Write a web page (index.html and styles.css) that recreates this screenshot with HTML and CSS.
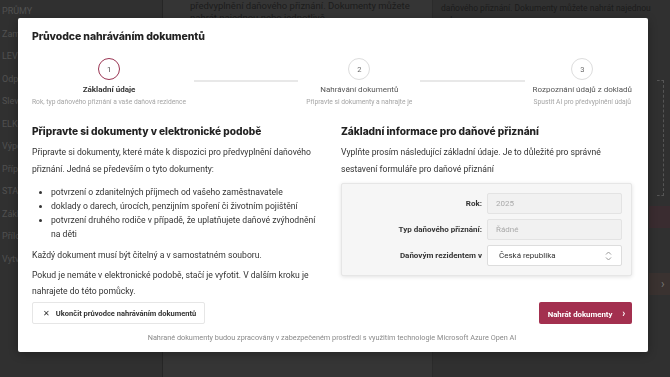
FILE: index.html
```html
<!DOCTYPE html>
<html lang="cs">
  <head>
    <meta charset="UTF-8" />
    <meta name="viewport" content="width=device-width, initial-scale=1.0" />
    <title>Průvodce nahráváním dokumentů</title>
    <link rel="stylesheet" href="styles.css">
  </head>
  <body>
    <!-- stránka v pozadí (ztmavená) -->
    <div class="page">
      <aside class="sidebar">
        <span>PRŮMY</span>
        <span>Zaměstnání</span>
        <span>LEVY</span>
        <span>Odpočty</span>
        <span>Slevy</span>
        <span>ELKO</span>
        <span>Výpočet</span>
        <span>Příplatky</span>
        <span>STATUS</span>
        <span>Základní</span>
        <span>Přílohy</span>
        <span>Vytvořit</span>
      </aside>
      <main class="page-main">
        <p>předvyplnění daňového přiznání. Dokumenty můžete<br>nahrát najednou nebo jednotlivě</p>
      </main>
      <section class="page-side">
        <p>daňového přiznání. Dokumenty můžete nahrát najednou nebo<br>jednotlivě, nebo je můžete</p>
        <div class="dashed"></div>
        <div class="ghost-btn"></div>
        <div class="ghost-btn dark">›</div>
      </section>
    </div>

    <!-- modální okno průvodce -->
    <div class="modal">
      <h1 class="modal-title">Průvodce nahráváním dokumentů</h1>

      <div class="steps">
        <div class="step active">
          <div class="step-circle">1</div>
          <div class="step-label">Základní údaje</div>
          <div class="step-sub">Rok, typ daňového přiznání a vaše daňová rezidence</div>
        </div>
        <div class="step-line"></div>
        <div class="step">
          <div class="step-circle">2</div>
          <div class="step-label">Nahrávání dokumentů</div>
          <div class="step-sub">Připravte si dokumenty a nahrajte je</div>
        </div>
        <div class="step-line"></div>
        <div class="step">
          <div class="step-circle">3</div>
          <div class="step-label">Rozpoznání údajů z dokladů</div>
          <div class="step-sub">Spustit AI pro předvyplnění údajů</div>
        </div>
      </div>

      <div class="columns">
        <div class="col">
          <h2>Připravte si dokumenty v elektronické podobě</h2>
          <p>Připravte si dokumenty, které máte k dispozici pro předvyplnění daňového přiznání. Jedná se především o tyto dokumenty:</p>
          <ul>
            <li>potvrzení o zdanitelných příjmech od vašeho zaměstnavatele</li>
            <li>doklady o darech, úrocích, penzijním spoření či životním pojištění</li>
            <li>potvrzení druhého rodiče v případě, že uplatňujete daňové zvýhodnění na děti</li>
          </ul>
          <p>Každý dokument musí být čitelný a v samostatném souboru.</p>
          <p class="tight">Pokud je nemáte v elektronické podobě, stačí je vyfotit. V dalším kroku je nahrajete do této pomůcky.</p>
        </div>

        <div class="col">
          <h2>Základní informace pro daňové přiznání</h2>
          <p>Vyplňte prosím následující základní údaje. Je to důležité pro správné sestavení formuláře pro daňové přiznání</p>
          <div class="form-box">
            <label class="form-row">
              <span>Rok:</span>
              <input class="field" type="text" value="2025" disabled>
            </label>
            <label class="form-row">
              <span>Typ daňového přiznání:</span>
              <input class="field" type="text" value="Řádné" disabled>
            </label>
            <label class="form-row">
              <span>Daňovým rezidentem v</span>
              <div class="field select">
                Česká republika
                <svg width="7" height="10" viewBox="0 0 7 10">
                  <path d="M1 3.5 3.5 1 6 3.5M1 6.5 3.5 9 6 6.5" fill="none" stroke="#999" stroke-width="1"/>
                </svg>
              </div>
            </label>
          </div>
        </div>
      </div>

      <div class="modal-footer">
        <button class="btn btn-light"><span class="x">✕</span> Ukončit průvodce nahráváním dokumentů</button>
        <button class="btn btn-primary">Nahrát dokumenty <span class="chev">›</span></button>
      </div>
      <p class="note">Nahrané dokumenty budou zpracovány v zabezpečeném prostředí s využitím technologie Microsoft Azure Open AI</p>
    </div>
  </body>
</html>
```

FILE: styles.css
```css
* {
  box-sizing: border-box;
}

body {
  margin: 0;
  width: 670px;
  height: 377px;
  overflow: hidden;
  background: #303030;
  font-family: Roboto, "Liberation Sans", sans-serif;
  color: #333;
}

/* pozadí stránky */
.page {
  display: flex;
  height: 377px;
}

.sidebar {
  width: 163px;
  display: flex;
  flex-direction: column;
  gap: 8.5px;
  padding: 4px 0 0 2px;
  border-right: 1px solid #262626;
  font-size: 9px;
  color: #505050;
  overflow: hidden;
  white-space: nowrap;
}

.sidebar span {
  height: 14px;
  line-height: 14px;
}

.page-main {
  width: 270px;
  background: #353535;
  border-right: 1px solid #2b2b2b;
  padding: 0 0 0 27px;
}

.page-main p,
.page-side p {
  margin: 0;
  font-size: 9.5px;
  line-height: 12px;
  color: #1c1c1c;
}

.page-side {
  flex: 1;
  padding: 0 0 0 8px;
}

.page-side p {
  margin-top: 2px;
  font-size: 8.5px;
}

.dashed {
  margin: 42px 6px 0 216px;
  height: 116px;
  border: 1px dashed #555;
  border-left: none;
}

.ghost-btn {
  margin: 10px 0 0 208px;
  height: 22px;
  background: #3a2c30;
}

.ghost-btn.dark {
  margin-top: 45px;
  background: #3a3230;
  color: #777;
  font-size: 12px;
  padding-left: 12px;
  line-height: 22px;
}

/* modální okno */
.modal {
  position: fixed;
  top: 18px;
  left: 18px;
  width: 630px;
  height: 334px;
  background: #fff;
  border-radius: 2px;
  padding: 12px 16px 0 14px;
  box-shadow: 0 2px 10px rgba(0, 0, 0, 0.3);
}

.modal-title {
  margin: 0;
  font-family: Inter, "Noto Sans", sans-serif;
  font-weight: 800;
  font-size: 10.5px;
  letter-spacing: -0.1px;
  line-height: 14px;
  color: #222;
}

/* kroky průvodce */
.steps {
  display: flex;
  align-items: flex-start;
  margin-top: 14px;
}

.step {
  display: flex;
  flex-direction: column;
  align-items: center;
  white-space: nowrap;
}

.step-circle {
  width: 22px;
  height: 22px;
  border-radius: 50%;
  border: 1.5px solid #ddd;
  display: flex;
  align-items: center;
  justify-content: center;
  font-size: 7.5px;
  color: #666;
}

.step.active .step-circle {
  border-color: #9b3553;
  color: #444;
}

.step-label {
  margin-top: 4px;
  font-size: 8px;
  line-height: 12px;
  color: #555;
}

.step.active .step-label {
  font-weight: bold;
  color: #333;
}

.step-sub {
  font-size: 6.7px;
  line-height: 12px;
  color: #a5a5a5;
}

.step-line {
  flex: 1;
  height: 2px;
  margin: 22px 8px 0;
  background: #e8e8e8;
}

/* obsah */
.columns {
  display: grid;
  grid-template-columns: 1fr 1fr;
  gap: 18px;
  margin-top: 16px;
}

.col h2 {
  margin: 0;
  font-family: Inter, "Noto Sans", sans-serif;
  font-weight: 800;
  font-size: 10.2px;
  letter-spacing: -0.05px;
  line-height: 14px;
  color: #222;
}

.col p {
  margin: 6px 0 0;
  font-size: 8.6px;
  line-height: 17px;
  color: #333;
}

.col p.tight {
  margin-top: 3px;
  line-height: 16px;
}

.col ul {
  margin: 7px 0 6px;
  padding-left: 19px;
  font-size: 8.6px;
  line-height: 14px;
  color: #333;
}

.col ul + p {
  margin-top: 0;
}

.form-box {
  margin-top: 5px;
  background: #f6f6f6;
  border: 1px solid #e6e6e6;
  border-radius: 2px;
  box-shadow: 0 1px 4px rgba(0, 0, 0, 0.12);
  padding: 9px 9px 9px 0;
  display: flex;
  flex-direction: column;
  gap: 5px;
}

.form-row {
  display: grid;
  grid-template-columns: 1fr 135px;
  gap: 5px;
  align-items: center;
}

.form-row span {
  text-align: right;
  font-size: 8px;
  font-weight: bold;
  color: #333;
}

.field {
  height: 21px;
  border: 1px solid #e3e3e3;
  border-radius: 2px;
  background: #f1f1f1;
  padding: 0 8px;
  font-family: inherit;
  font-size: 8px;
  color: #aaa;
}

.select {
  display: flex;
  align-items: center;
  justify-content: space-between;
  background: #fff;
  border-color: #ddd;
  color: #333;
  padding: 0 9px 0 11px;
}

/* patička */
.modal-footer {
  display: flex;
  justify-content: space-between;
  align-items: flex-start;
  margin-top: 3px;
}

.btn {
  height: 22px;
  border-radius: 2px;
  font-family: inherit;
  font-size: 7.5px;
  font-weight: bold;
  white-space: nowrap;
}

.btn-light {
  width: 173px;
  padding: 0 0 0 10px;
  text-align: left;
  background: #fff;
  border: 1px solid #e6e6e6;
  color: #333;
}

.btn-light .x {
  font-weight: normal;
  margin-right: 4px;
}

.btn-primary {
  width: 93px;
  padding: 0 0 0 2px;
  background: #a3304f;
  border: none;
  color: #fff;
  font-size: 7.8px;
}

.btn-primary .chev {
  margin-left: 8px;
  font-size: 10px;
}

.note {
  margin: 9px 0 0;
  text-align: center;
  font-size: 7.3px;
  color: #8a8a8a;
}
```
